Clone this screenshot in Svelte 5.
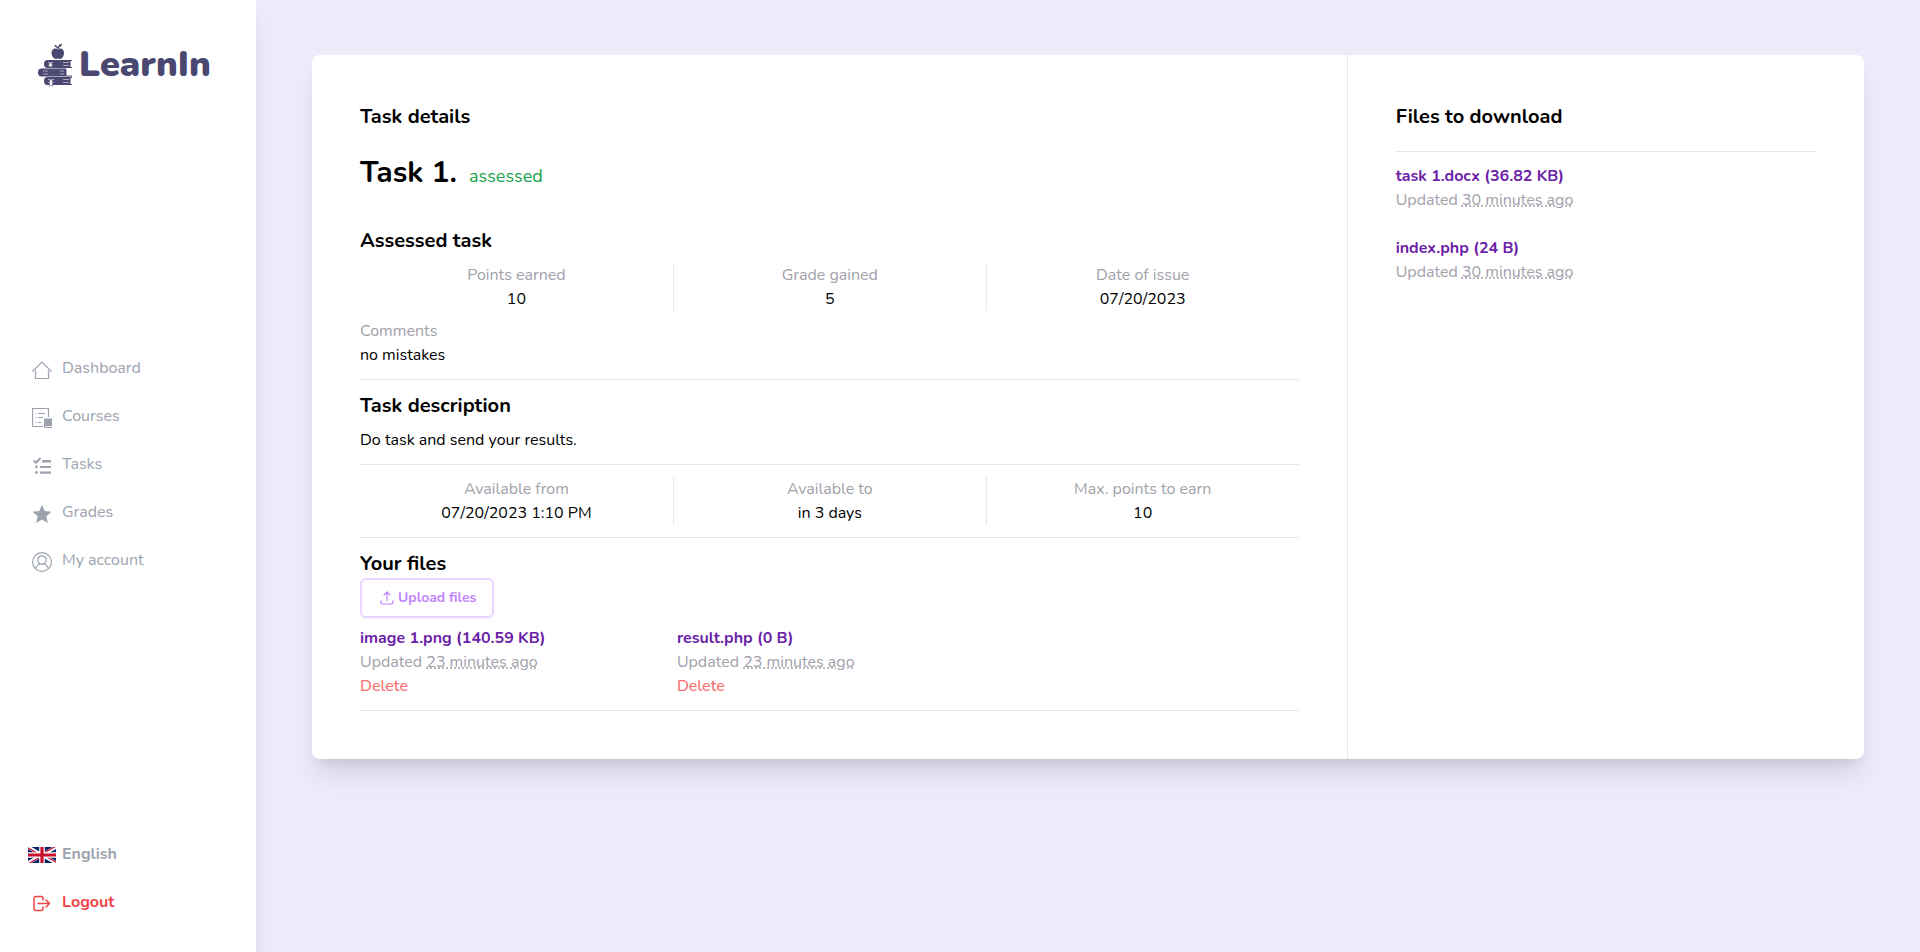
<script>
  const nav = [
    { label: 'Dashboard', icon: 'home' },
    { label: 'Courses', icon: 'course' },
    { label: 'Tasks', icon: 'tasks' },
    { label: 'Grades', icon: 'star' },
    { label: 'My account', icon: 'user' }
  ];
  const result = [
    { label: 'Points earned', value: '10' },
    { label: 'Grade gained', value: '5' },
    { label: 'Date of issue', value: '07/20/2023' }
  ];
  const terms = [
    { label: 'Available from', value: '07/20/2023 1:10 PM' },
    { label: 'Available to', value: 'in 3 days' },
    { label: 'Max. points to earn', value: '10' }
  ];
  const uploads = [
    { name: 'image 1.png (140.59 KB)', updated: '23 minutes ago' },
    { name: 'result.php (0 B)', updated: '23 minutes ago' }
  ];
  const downloads = [
    { name: 'task 1.docx (36.82 KB)', updated: '30 minutes ago' },
    { name: 'index.php (24 B)', updated: '30 minutes ago' }
  ];
</script>

{#snippet stats(items)}
  <dl class="stats">
    {#each items as item}
      <div>
        <dt>{item.label}</dt>
        <dd>{item.value}</dd>
      </div>
    {/each}
  </dl>
{/snippet}

<div class="page">
  <aside class="sidebar">
    <a class="logo" href="#home">
      <svg width="35" height="44" viewBox="0 0 35 44" fill="#4a4770">
        <path d="M20 6.5C17.500 4.300 13.500 5.800 13.500 9.800C13.500 13.500 16 16 18 16C19 16 19.400 15.500 20 15.500C20.600 15.500 21 16 22 16C24 16 26 13.500 26 9.800C26 5.800 22.500 4.300 20 6.500Z" />
        <path d="M20 6Q20 3.500 22.500 1.500M19.500 5Q18.500 3 16.500 2.500" fill="none" stroke="#4a4770" stroke-width="1.300" />
        <path d="M20.500 4.500Q20.500 1.500 24 .5Q23.800 4 20.500 4.500Z" />
        <path d="M34 17H9.500A3.500 4 0 0 0 9.500 25H34V24H32.500V18H34Z" />
        <path d="M34 34H9.500A3.500 4 0 0 0 9.500 42H34V41H32.500V35H34Z" />
        <path d="M28 25.500H3.500A3.500 4 0 0 0 3.500 33.500H34V32.500H28.500V26.500H28Z" />
        <path d="M10 19.500H31M10 22.500H31M5 28H26M5 31H26M10 36.500H31M10 39.500H31" fill="none" stroke="#a9a7bd" stroke-width="1" />
        <path d="M15 18.800H25V23.200H15ZM10 27.300H22V31.700H10ZM16 35.800H25V40.200H16Z" />
        <path d="M11 20H14V24.500L12.500 23.300L11 24.500ZM11.500 37H14.500V43.500L13 42L11.500 43.500Z" fill="#fff" stroke="#4a4770" stroke-width=".5" />
      </svg>
      <span>LearnIn</span>
    </a>

    <nav class="menu">
      {#each nav as item}
        <a href="#{item.icon}">
          <span class="icon">
            {#if item.icon === 'home'}
              <svg viewBox="0 0 20 20" fill="none" stroke="currentColor" stroke-width="1.200"><path d="M.5 11.500L10 2l9.500 9.500M3.500 10.500v8h13v-8" /></svg>
            {:else if item.icon === 'course'}
              <svg viewBox="0 0 20 20" fill="none" stroke="currentColor"><path d="M11 18.500H.5V.5h16V9" stroke-width="1.200" /><path d="M6 5.500H13M6 9.500H11M6 14.500H9M3.500 5.500h1M3.500 9.500h1M3.500 14.500h1" /><path d="M13 10.500h7V20h-6.500a1.500 1.500 0 0 1-1.500-1.500v-7a1 1 0 0 1 1-1z" fill="currentColor" stroke="none" /><path d="M13 18.500h7" stroke="#fff" stroke-width=".8" /></svg>
            {:else if item.icon === 'tasks'}
              <svg viewBox="0 0 20 20" fill="currentColor"><path d="M1.500 4.500l2.500 2.300L8.500 2" fill="none" stroke="currentColor" stroke-width="2" /><path d="M10 4h9v2.500h-9zM8 10h11v2H8zM8 15.500h11v2.200H8z" /><circle cx="4.500" cy="11" r="1.400" /><circle cx="4.500" cy="16.500" r="1.400" /></svg>
            {:else if item.icon === 'star'}
              <svg viewBox="0 0 20 20" fill="currentColor"><path d="M10 .8l2.700 6.300 6.800.6-5.200 4.500 1.600 6.800L10 15.400 4.100 19l1.600-6.800L.5 7.700l6.800-.6z" /></svg>
            {:else}
              <svg viewBox="0 0 20 20" fill="none" stroke="currentColor" stroke-width="1.200"><circle cx="10" cy="10" r="9.400" /><circle cx="10" cy="8" r="4.200" /><path d="M3.500 16.800C4.500 14 6.500 12.300 8.500 12M16.500 16.800C15.500 14 13.500 12.300 11.500 12" /></svg>
            {/if}
          </span>
          {item.label}
        </a>
      {/each}
    </nav>

    <div class="menu bottom">
      <button type="button">
        <span class="icon">
          <svg class="flag" viewBox="0 0 28 16">
            <path fill="#012169" d="M0 0h28v16H0z" />
            <path stroke="#fff" stroke-width="3.400" d="M0 0l28 16M28 0L0 16" />
            <path stroke="#c8102e" stroke-width="1.200" d="M0 .8l13 7.400M28 15.200L15 7.800M27.500-.6L14 7.100M.5 16.600L14 8.900" />
            <path stroke="#fff" stroke-width="5.600" d="M14 0v16M0 8h28" />
            <path stroke="#c8102e" stroke-width="3.200" d="M14 0v16M0 8h28" />
          </svg>
        </span>
        English
      </button>
      <button type="button" class="logout">
        <span class="icon">
          <svg viewBox="0 0 20 20" fill="none" stroke="currentColor" stroke-width="1.500" stroke-linecap="round" stroke-linejoin="round"><path d="M11 6V4.500a2 2 0 0 0-2-2H4a2 2 0 0 0-2 2v10a2 2 0 0 0 2 2h5a2 2 0 0 0 2-2V13M6 9.500h11.500M14 6l3.500 3.500L14 13" /></svg>
        </span>
        Logout
      </button>
    </div>
  </aside>

  <main>
    <article class="card">
      <section class="details">
        <h2>Task details</h2>
        <div class="title">
          <h1>Task 1.</h1>
          <span>assessed</span>
        </div>

        <h2>Assessed task</h2>
        {@render stats(result)}
        <dl class="comments">
          <dt>Comments</dt>
          <dd>no mistakes</dd>
        </dl>
        <hr />
        <h2>Task description</h2>
        <p class="description">Do task and send your results.</p>
        <hr />
        {@render stats(terms)}
        <hr />
        <h2>Your files</h2>
        <button type="button" class="upload">
          <svg width="14" height="14" viewBox="0 0 14 14" fill="none" stroke="currentColor" stroke-width="1.200" stroke-linecap="round" stroke-linejoin="round"><path d="M1 9.500v1.800a1.700 1.700 0 0 0 1.700 1.700h8.600a1.700 1.700 0 0 0 1.700-1.700V9.500M7 9.500V1M4 4l3-3 3 3" /></svg>
          Upload files
        </button>
        <ul class="uploads">
          {#each uploads as file}
            <li>
              <a href="#file">{file.name}</a>
              <p>Updated <abbr title={file.updated}>{file.updated}</abbr></p>
              <button type="button">Delete</button>
            </li>
          {/each}
        </ul>
        <hr />
      </section>

      <section class="downloads">
        <h2>Files to download</h2>
        <hr />
        <ul>
          {#each downloads as file}
            <li>
              <a href="#file">{file.name}</a>
              <p>Updated <abbr title={file.updated}>{file.updated}</abbr></p>
            </li>
          {/each}
        </ul>
      </section>
    </article>
  </main>
</div>

<style>
  :global(body) {
    margin: 0;
    background: #ecebfa;
  }
  .page {
    display: flex;
    min-height: 100vh;
    font: 400 16px/24px Nunito, Lato, sans-serif;
    color: #000;
  }
  .page :is(h1, h2, p, dl, dd, ul) {
    margin: 0;
    padding: 0;
  }
  ul {
    list-style: none;
  }
  a {
    text-decoration: none;
  }
  button {
    font: inherit;
    background: none;
    border: 0;
    padding: 0;
    cursor: pointer;
  }

  .sidebar {
    box-sizing: border-box;
    width: 256px;
    flex: none;
    display: flex;
    flex-direction: column;
    justify-content: space-between;
    padding-bottom: 26px;
    background: #fff;
    box-shadow: 0 20px 25px -5px rgb(0 0 0 / 0.1), 0 8px 10px -6px rgb(0 0 0 / 0.1);
  }
  .logo {
    display: flex;
    align-items: center;
    gap: 6px;
    height: 54px;
    padding: 38px 38px 6px;
    color: #4a4770;
    font-size: 36px;
    font-weight: 900;
  }
  .menu {
    display: flex;
    flex-direction: column;
  }
  .menu :is(a, button) {
    display: flex;
    gap: 6px;
    padding: 12px 28px;
    color: #9ca3af;
  }
  .menu.bottom button {
    font-weight: 700;
  }
  .menu.bottom .logout {
    color: #ef4444;
  }
  .icon {
    display: flex;
    justify-content: center;
    align-items: flex-end;
    width: 28px;
    height: 24px;
  }
  .icon svg {
    display: block;
    width: 20px;
    height: 20px;
  }
  .icon .flag {
    width: 28px;
    height: 16px;
    margin-bottom: 3px;
  }

  main {
    flex: 1;
    padding: 55px 56px;
  }
  .card {
    display: grid;
    grid-template-columns: 2fr 1fr;
    background: #fff;
    border-radius: 8px;
    box-shadow: 0 20px 25px -5px rgb(0 0 0 / 0.1), 0 8px 10px -6px rgb(0 0 0 / 0.1);
  }
  .card section {
    padding: 48px;
  }
  .downloads {
    border-left: 1px solid #e5e7eb;
  }
  h1 {
    font-size: 30px;
    line-height: 36px;
    font-weight: 700;
  }
  h2 {
    font-size: 20px;
    line-height: 28px;
    font-weight: 700;
  }
  .title {
    display: flex;
    align-items: baseline;
    gap: 12px;
    padding: 24px 0 36px;
  }
  .title span {
    font-size: 18px;
    color: #16a34a;
  }
  hr {
    margin: 12px 0;
    border: 0;
    border-top: 1px solid #e5e7eb;
  }
  .details hr:last-child {
    margin-bottom: 0;
  }
  .downloads hr {
    margin-top: 20px;
  }
  dt,
  li p {
    color: #a1a1aa;
  }
  .stats {
    display: grid;
    grid-template-columns: repeat(3, 1fr);
    text-align: center;
  }
  .stats div + div {
    border-left: 1px solid #e5e7eb;
  }
  h2 + .stats,
  .comments,
  .description {
    margin-top: 8px !important;
  }
  li a {
    display: block;
    color: #6b21a8;
    font-weight: 700;
  }
  li button {
    display: block;
    color: #f87171;
    font-weight: 500;
  }
  .upload {
    display: flex;
    align-items: center;
    gap: 4px;
    height: 40px;
    padding: 0 16px 0 18px;
    border: 2px solid #e9d5ff;
    border-radius: 6px;
    color: #c084fc;
    font-size: 14px;
    font-weight: 700;
    box-shadow: 0 1px 2px rgb(0 0 0 / 0.05);
  }
  .uploads {
    display: grid;
    grid-template-columns: repeat(3, 1fr);
    gap: 12px;
    padding-top: 8px !important;
  }
  .downloads ul {
    display: grid;
    gap: 24px;
  }
</style>
